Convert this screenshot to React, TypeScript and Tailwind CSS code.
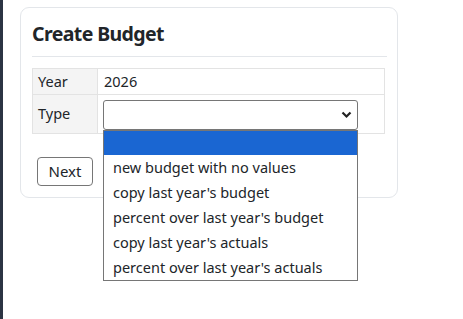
import React from 'react';

const options = [
  '',
  'new budget with no values',
  "copy last year's budget",
  "percent over last year's budget",
  "copy last year's actuals",
  "percent over last year's actuals",
];

export default function App() {
  return (
    <div
      className="min-h-screen flex bg-white text-[#212529]"
      style={{ fontFamily: '"Noto Sans", "Liberation Sans", sans-serif' }}
    >
      {/* sidebar edge */}
      <div className="w-[3px] bg-[#2b3443] shrink-0" />

      <div className="pl-[17px] pt-[7px]">
        <div className="w-[378px] border border-[#e3e6ea] rounded-[9px] px-[11px] pt-[12px] pb-[11px]">
          <h2 className="text-[19.5px] leading-[28px] font-bold tracking-[-0.6px] text-[#212529] pb-[8px] border-b border-[#e3e6ea] mr-[-1px]">
            Create Budget
          </h2>

          <table className="mt-[11px] w-[353px] border-collapse text-[14.5px]">
            <tbody>
              <tr className="h-[26px]">
                <th className="w-[65px] bg-[#f4f4f4] border border-[#e3e3e3] text-left font-normal pl-[5px]">Year</th>
                <td className="border border-[#e3e3e3] pl-[6px]">2026</td>
              </tr>
              <tr className="h-[39px]">
                <th className="bg-[#f4f4f4] border border-[#e3e3e3] text-left font-normal pl-[5px]">Type</th>
                <td className="border border-[#e3e3e3] pl-[5px] pt-[5px] pb-[3px]">
                  <div className="relative w-[255px]">
                    <div className="h-[30px] border border-[#767676] rounded-[3px] bg-white flex items-center justify-end pr-[5px]">
                      <svg width="11" height="8" viewBox="0 0 11 8" className="text-[#222]">
                        <path d="M1.5 1.5 L5.5 5.5 L9.5 1.5" fill="none" stroke="currentColor" strokeWidth="2.2" />
                      </svg>
                    </div>
                    {/* open native dropdown list */}
                    <div className="absolute left-0 top-full w-[255px] border border-[#767676] bg-white z-10">
                      {options.map((o, i) => (
                        <div
                          key={i}
                          className={`pl-[9px] flex items-center whitespace-nowrap ${
                            i === 0 ? 'h-[24px] bg-[#1a66d2]' : 'h-[25px]'
                          }`}
                        >
                          {o}
                        </div>
                      ))}
                    </div>
                  </div>
                </td>
              </tr>
            </tbody>
          </table>

          <div className="mt-[23px] pl-[5px]">
            <button className="w-[56px] h-[29px] border border-[#767676] rounded-[4px] text-[15px] bg-white">
              Next
            </button>
          </div>
        </div>
      </div>
    </div>
  );
}
